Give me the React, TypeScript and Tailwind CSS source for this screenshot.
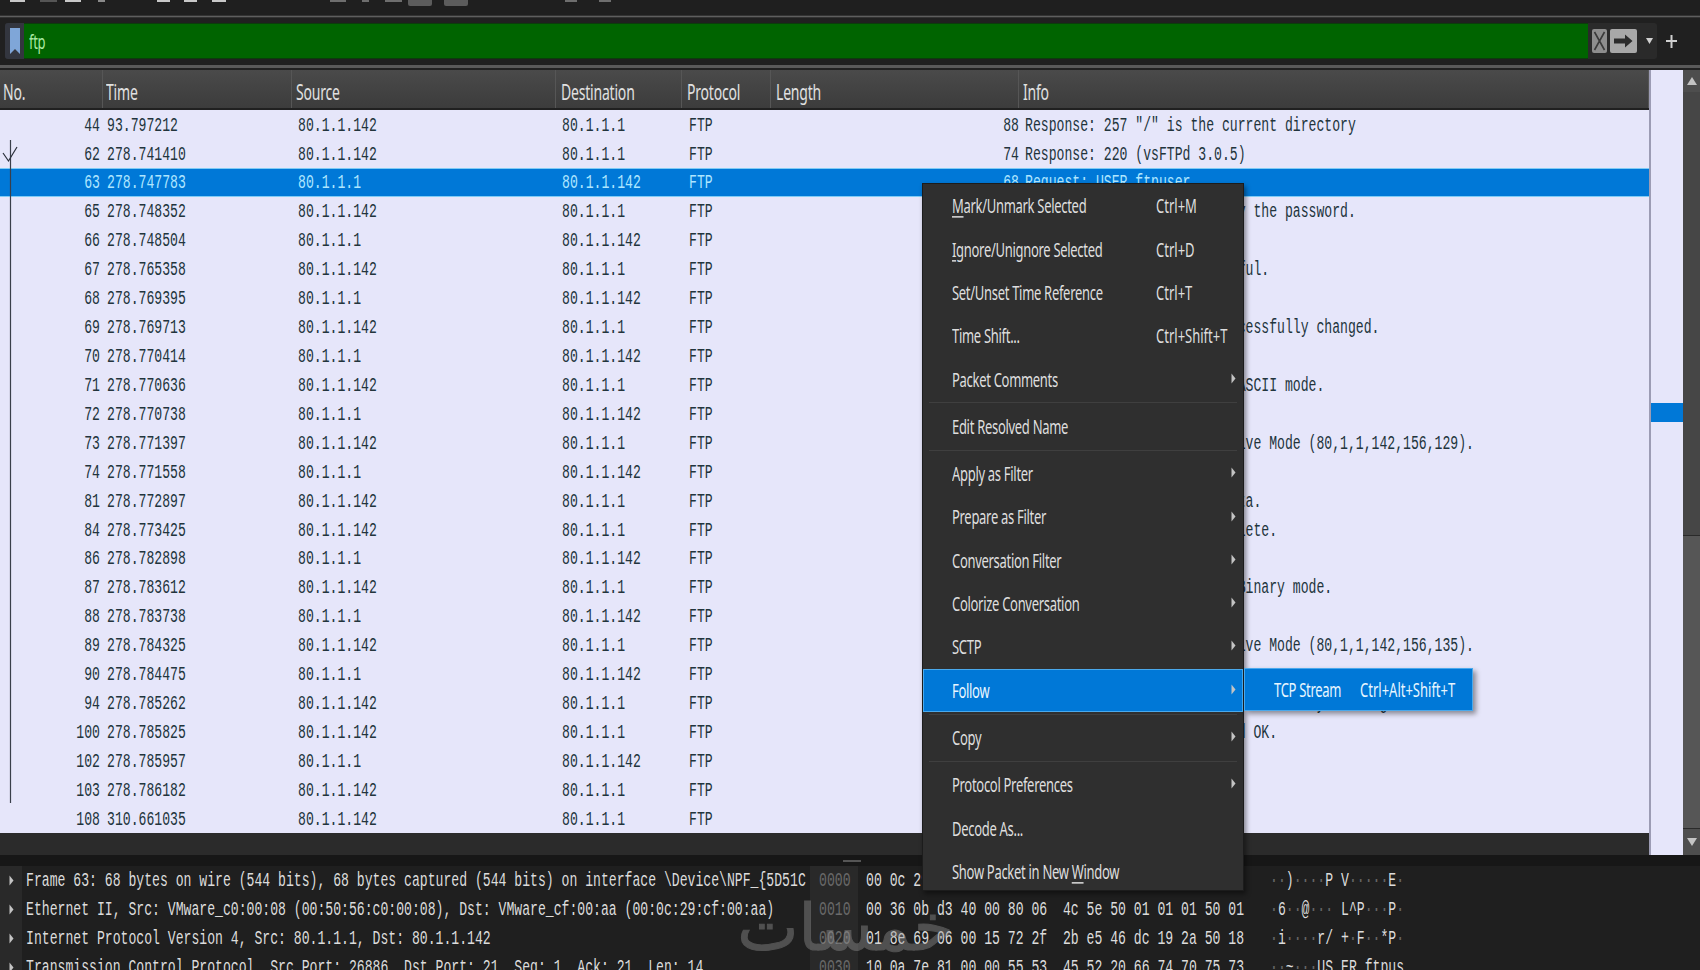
import React from "react";

const rows: [string, string, string, string, string, string][] = [
  ["44", "93.797212", "80.1.1.142", "80.1.1.1", "88", 'Response: 257 "/" is the current directory'],
  ["62", "278.741410", "80.1.1.142", "80.1.1.1", "74", "Response: 220 (vsFTPd 3.0.5)"],
  ["63", "278.747783", "80.1.1.1", "80.1.1.142", "68", "Request: USER ftpuser"],
  ["65", "278.748352", "80.1.1.142", "80.1.1.1", "88", "Response: 331 Please specify the password."],
  ["66", "278.748504", "80.1.1.1", "80.1.1.142", "68", "Request: PASS ftpuser"],
  ["67", "278.765358", "80.1.1.142", "80.1.1.1", "77", "Response: 230 Login successful."],
  ["68", "278.769395", "80.1.1.1", "80.1.1.142", "62", "Request: CWD /"],
  ["69", "278.769713", "80.1.1.142", "80.1.1.1", "91", "Response: 250 Directory successfully changed."],
  ["70", "278.770414", "80.1.1.1", "80.1.1.142", "62", "Request: TYPE A"],
  ["71", "278.770636", "80.1.1.142", "80.1.1.1", "84", "Response: 200 Switching to ASCII mode."],
  ["72", "278.770738", "80.1.1.1", "80.1.1.142", "60", "Request: PASV"],
  ["73", "278.771397", "80.1.1.142", "80.1.1.1", "105", "Response: 227 Entering Passive Mode (80,1,1,142,156,129)."],
  ["74", "278.771558", "80.1.1.1", "80.1.1.142", "60", "Request: LIST"],
  ["81", "278.772897", "80.1.1.142", "80.1.1.1", "93", "Response: 150 Ok to send data."],
  ["84", "278.773425", "80.1.1.142", "80.1.1.1", "78", "Response: 226 Transfer complete."],
  ["86", "278.782898", "80.1.1.1", "80.1.1.142", "62", "Request: TYPE I"],
  ["87", "278.783612", "80.1.1.142", "80.1.1.1", "85", "Response: 200 Switching to Binary mode."],
  ["88", "278.783738", "80.1.1.1", "80.1.1.142", "60", "Request: PASV"],
  ["89", "278.784325", "80.1.1.142", "80.1.1.1", "105", "Response: 227 Entering Passive Mode (80,1,1,142,156,135)."],
  ["90", "278.784475", "80.1.1.1", "80.1.1.142", "60", "Request: LIST"],
  ["94", "278.785262", "80.1.1.142", "80.1.1.1", "93", "Response: 150 Here comes the directory listing."],
  ["100", "278.785825", "80.1.1.142", "80.1.1.1", "78", "Response: 226 Directory send OK."],
  ["102", "278.785957", "80.1.1.1", "80.1.1.142", "60", "Request: QUIT"],
  ["103", "278.786182", "80.1.1.142", "80.1.1.1", "68", "Response: 221 Goodbye."],
  ["108", "310.661035", "80.1.1.142", "80.1.1.1", "68", "Response: 221 Goodbye."],
];

const headers = [
  { label: "No.", w: "w-[103px]", pl: "pl-[3px]" },
  { label: "Time", w: "w-[189px]", pl: "pl-[3px]" },
  { label: "Source", w: "w-[264px]", pl: "pl-[4px]" },
  { label: "Destination", w: "w-[126px]", pl: "pl-[5px]" },
  { label: "Protocol", w: "w-[89px]", pl: "pl-[5px]" },
  { label: "Length", w: "w-[248px]", pl: "pl-[5px]" },
  { label: "Info", w: "flex-1", pl: "pl-[4px]" },
];

const tall = "block origin-center scale-y-[1.5] whitespace-pre";
const mono = "font-['Liberation_Mono',monospace] text-[13.13px]";
const ui = "font-['Noto_Sans',sans-serif] text-[13px] tracking-[-0.3px]";

function PacketRow({ r, selected }: { r: (typeof rows)[number]; selected: boolean }) {
  return (
    <div
      className={`flex h-[28.93px] items-center pt-[2px] ${mono} ${
        selected ? "bg-[#0078d7] text-[#aee6ff] shadow-[inset_0_1px_0_#80ccf5,inset_0_-1px_0_#80ccf5]" : "text-[#22343c]"
      }`}
    >
      <span className={`${tall} w-[100px] text-right`}>{r[0]}</span>
      <span className={`${tall} w-[198px] pl-[7px]`}>{r[1]}</span>
      <span className={`${tall} w-[264px]`}>{r[2]}</span>
      <span className={`${tall} w-[127px]`}>{r[3]}</span>
      <span className={`${tall} w-[50px]`}>FTP</span>
      <span className={`${tall} w-[280px] text-right`}>{r[4]}</span>
      <span className={`${tall} pl-[6px]`}>{r[5]}</span>
    </div>
  );
}

function Caret({ className = "" }: { className?: string }) {
  return (
    <svg width="5" height="11" viewBox="0 0 5 11" className={className}>
      <path d="M0.5 0.5 L4.5 5.5 L0.5 10.5 Z" fill="#c4c4c4" />
    </svg>
  );
}

function MenuItem({ label, shortcut, sub, active }: { label: React.ReactNode; shortcut?: string; sub?: boolean; active?: boolean }) {
  return (
    <div
      className={`relative flex h-[43.3px] items-center pl-[29px] pt-[2px] ${ui} ${
        active ? "bg-[#0078d7] text-[#e8f6ff] shadow-[inset_0_0_0_1px_#4aa9ec]" : "text-[#dedede]"
      }`}
    >
      <span className={`${tall} w-[204px]`}>{label}</span>
      {shortcut && <span className={`${tall} tracking-normal`}>{shortcut}</span>}
      {sub && <Caret className="absolute right-[7px] top-[15px]" />}
    </div>
  );
}

function MenuSep() {
  return (
    <div className="flex h-[4px] items-center px-[6px]">
      <div className="h-px w-full bg-[#3f3f3f]" />
    </div>
  );
}

const hexRows = [
  ["0000", "00 0c 29 cf 00 aa 00 50  56 c0 00 08 08 00 45 00", "··)····P V·····E·"],
  ["0010", "00 36 0b d3 40 00 80 06  4c 5e 50 01 01 01 50 01", "·6··@··· L^P···P·"],
  ["0020", "01 8e 69 06 00 15 72 2f  2b e5 46 dc 19 2a 50 18", "·i····r/ +·F··*P·"],
  ["0030", "10 0a 7e 81 00 00 55 53  45 52 20 66 74 70 75 73", "··~···US ER ftpus"],
];

const details = [
  "Frame 63: 68 bytes on wire (544 bits), 68 bytes captured (544 bits) on interface \\Device\\NPF_{5D51C9A2-77B4-4E21-A1B3-6F0C2D8E1A90}, id 0",
  "Ethernet II, Src: VMware_c0:00:08 (00:50:56:c0:00:08), Dst: VMware_cf:00:aa (00:0c:29:cf:00:aa)",
  "Internet Protocol Version 4, Src: 80.1.1.1, Dst: 80.1.1.142",
  "Transmission Control Protocol, Src Port: 26886, Dst Port: 21, Seq: 1, Ack: 21, Len: 14",
];

const toolbarBits = [
  "ml-[10px] w-[15px] bg-[#c8c8c8]",
  "ml-[15px] w-[17px] bg-[#555555]",
  "ml-[8px] w-[16px] bg-[#c8c8c8]",
  "ml-[17px] w-[7px] bg-[#8a8a8a]",
  "ml-[52px] w-[13px] bg-[#c8c8c8]",
  "ml-[14px] w-[13px] bg-[#c8c8c8]",
  "ml-[15px] w-[14px] bg-[#c8c8c8]",
  "ml-[104px] w-[16px] bg-[#6e6e6e]",
  "ml-[16px] w-[7px] bg-[#6e6e6e]",
  "ml-[16px] w-[17px] bg-[#6e6e6e]",
];

export default function App() {
  return (
    <div className="relative flex h-[970px] w-[1700px] flex-col overflow-hidden bg-[#1e1e1e]">
      {/* toolbar */}
      <div className="flex h-[15px] shrink-0 items-start bg-[#1f1f1f]">
        {toolbarBits.map((c, i) => (
          <div key={i} className={`h-[2px] ${c}`} />
        ))}
        <div className="ml-[6px] h-[6px] w-[24px] rounded-b-[2px] bg-[#5c5c5c]" />
        <div className="ml-[12px] h-[6px] w-[24px] rounded-b-[2px] bg-[#5c5c5c]" />
        <div className="ml-[97px] h-[2px] w-[12px] bg-[#6e6e6e]" />
        <div className="ml-[22px] h-[2px] w-[12px] bg-[#6e6e6e]" />
      </div>
      <div className="h-[3px] shrink-0 border-y border-[#333333] bg-[#5e5e5e]" />

      {/* filter bar */}
      <div className="flex h-[47px] shrink-0 items-center bg-[#202020] pb-[1px] pl-[5px]">
        <div className="flex h-[36px] w-[1652px] items-center rounded-[3px] bg-[#2a2a2a]">
          <div className="flex h-full w-[19px] shrink-0 items-center justify-center rounded-l-[3px] bg-[#33363f]">
            <svg width="10" height="26" viewBox="0 0 10 26">
              <path d="M0 0 H10 V26 L5 21 L0 26 Z" fill="#7fa6d8" />
            </svg>
          </div>
          <div className="flex h-full w-[1564px] shrink-0 items-center border-y border-[#0b3d0b] bg-[#006400] pl-[5px] pt-[3px]">
            <span className={`${tall} ${ui} text-[#a9e9a2]`}>ftp</span>
          </div>
          <div className="ml-[4px] flex h-[24px] w-[15px] items-center justify-center rounded-[2px] bg-[#8e8e8e]">
            <svg width="13" height="20" viewBox="0 0 13 20">
              <path d="M1.5 1 L11.5 19 M11.5 1 L1.5 19" stroke="#3a3a3a" strokeWidth="1.6" />
            </svg>
          </div>
          <div className="ml-[3px] flex h-[24px] w-[27px] items-center justify-center rounded-[2px] bg-[#a8a8a8]">
            <svg width="19" height="14" viewBox="0 0 19 14">
              <path d="M0 4.5 H11 V0.5 L18.5 7 L11 13.5 V9.5 H0 Z" fill="#2c2c2c" />
            </svg>
          </div>
          <svg width="7" height="6" viewBox="0 0 7 6" className="ml-[9px]">
            <path d="M0 0 H7 L3.5 6 Z" fill="#d0d0d0" />
          </svg>
        </div>
        <svg width="11" height="13" viewBox="0 0 11 13" className="ml-[9px]">
          <path d="M5.5 0 V13 M0 6 H11" stroke="#d0d0d0" strokeWidth="2" />
        </svg>
      </div>
      <div className="h-[5px] shrink-0 border-b-2 border-[#222222] bg-[#5a5a5a]" />

      {/* packet list */}
      <div className="flex h-[785px] shrink-0">
        <div className="flex w-[1651px] shrink-0 flex-col border-r-2 border-[#9c9cb4]">
          <div className="flex h-[40px] shrink-0 border-b-2 border-[#202020] bg-gradient-to-b from-[#4a4a4a] to-[#3c3c3c]">
            {headers.map((h) => (
              <div key={h.label} className={`flex h-full items-center border-r border-[#565656] pt-[4px] ${h.w} ${h.pl}`}>
                <span className={`${tall} font-['Noto_Sans',sans-serif] text-[14px] tracking-[-0.2px] text-[#e0e0e0]`}>{h.label}</span>
              </div>
            ))}
          </div>
          <div className="h-[722.5px] shrink-0 overflow-hidden bg-[#e6e6fa]">
            {rows.map((r, i) => (
              <PacketRow key={r[0]} r={r} selected={i === 2} />
            ))}
          </div>
          <div className="flex-1 bg-[#2b2b2b]" />
        </div>
        <div className="flex w-[32px] shrink-0 flex-col bg-[#e6e6fa]">
          <div className="mt-[333px] h-[19px] bg-[#0078d7]" />
        </div>
        <div className="flex w-[17px] shrink-0 flex-col bg-[#464646]">
          <div className="flex h-[22px] items-center justify-center bg-[#4e4e4e]">
            <svg width="10" height="8" viewBox="0 0 10 8">
              <path d="M5 0 L10 8 H0 Z" fill="#c4c4c4" />
            </svg>
          </div>
          <div className="h-[443px] shrink-0" />
          <div className="h-[293px] shrink-0 border-t border-[#2a2a2a] bg-[#565656]" />
          <div className="flex flex-1 items-center justify-center border-t border-[#2a2a2a] bg-[#4e4e4e]">
            <svg width="10" height="8" viewBox="0 0 10 8">
              <path d="M0 0 H10 L5 8 Z" fill="#c4c4c4" />
            </svg>
          </div>
        </div>
      </div>

      {/* splitter */}
      <div className="flex h-[11px] shrink-0 items-center bg-[#171717] pl-[843px]">
        <div className="h-[2px] w-[18px] bg-[#555555]" />
      </div>

      {/* bottom panes */}
      <div className="flex min-h-0 flex-1 overflow-hidden bg-[#1f1f1f] text-[#dcdcdc]">
        <div className="flex w-[806px] shrink-0 overflow-hidden">
          <div className="flex w-[22px] shrink-0 flex-col bg-[#292929] pl-[9px]">
            {details.map((d) => (
              <div key={d} className="flex h-[29px] shrink-0 items-center">
                <Caret />
              </div>
            ))}
          </div>
          <div className="min-w-0 flex-1 overflow-hidden pl-[4px]">
            {details.map((d) => (
              <div key={d} className={`flex h-[29px] items-center ${mono}`}>
                <span className={tall}>{d}</span>
              </div>
            ))}
          </div>
        </div>
        <div className="w-[4px] shrink-0" />
        <div className="flex w-[48px] shrink-0 flex-col bg-[#292929] pl-[9px] text-[#6a6a6a]">
          {hexRows.map((h) => (
            <div key={h[0]} className={`flex h-[29px] shrink-0 items-center ${mono}`}>
              <span className={tall}>{h[0]}</span>
            </div>
          ))}
        </div>
        <div className="pl-[8px]">
          {hexRows.map((h) => (
            <div key={h[0]} className={`flex h-[29px] items-center ${mono}`}>
              <span className={`${tall} w-[404px]`}>{h[1]}</span>
              <span className={tall}>
                {h[2].split("").map((ch, i) => (
                  <span key={i} className={ch === "·" ? "text-[#666666]" : ""}>
                    {ch}
                  </span>
                ))}
              </span>
            </div>
          ))}
        </div>
      </div>

      {/* related packet line */}
      <svg width="20" height="670" viewBox="0 0 20 670" className="pointer-events-none absolute left-0 top-[138px]">
        <path d="M10.5 2 V665" stroke="#3a3f4a" strokeWidth="1.2" fill="none" />
        <path d="M3 15 L8.5 23 L17 9" stroke="#2a2f3a" strokeWidth="1.2" fill="none" />
      </svg>

      {/* watermark */}
      <div
        dir="rtl"
        className="pointer-events-none absolute left-[748px] top-[888px] w-[206px] text-center font-['DejaVu_Sans',sans-serif] text-[65px] leading-[80px] text-[#9a9a9a] opacity-40 [-webkit-text-stroke:1px_#9a9a9a]"
      >
        خمسات
      </div>

      {/* context menu */}
      <div className="absolute left-[922px] top-[183px] h-[708px] w-[322px] overflow-hidden border border-[#1c1c1c] bg-[#2f2f2f] pt-[0.5px] shadow-[2px_3px_5px_rgba(0,0,0,0.45)]">
        <MenuItem label={<><span className="underline underline-offset-2">M</span>ark/Unmark Selected</>} shortcut="Ctrl+M" />
        <MenuItem label={<><span className="underline underline-offset-2">I</span>gnore/Unignore Selected</>} shortcut="Ctrl+D" />
        <MenuItem label="Set/Unset Time Reference" shortcut="Ctrl+T" />
        <MenuItem label="Time Shift..." shortcut="Ctrl+Shift+T" />
        <MenuItem label="Packet Comments" sub />
        <MenuSep />
        <MenuItem label="Edit Resolved Name" />
        <MenuSep />
        <MenuItem label="Apply as Filter" sub />
        <MenuItem label="Prepare as Filter" sub />
        <MenuItem label="Conversation Filter" sub />
        <MenuItem label="Colorize Conversation" sub />
        <MenuItem label="SCTP" sub />
        <MenuItem label="Follow" sub active />
        <MenuSep />
        <MenuItem label="Copy" sub />
        <MenuSep />
        <MenuItem label="Protocol Preferences" sub />
        <MenuItem label="Decode As..." />
        <MenuItem label={<>Show Packet in New <span className="underline underline-offset-2">W</span>indow</>} />
      </div>

      {/* submenu */}
      <div className={`absolute left-[1244px] top-[668px] flex h-[43px] w-[229px] items-center bg-[#0078d7] pl-[30px] pt-[2px] text-[#e8f6ff] shadow-[inset_0_0_0_1px_#4aa9ec,3px_3px_5px_rgba(0,0,0,0.4)] ${ui}`}>
        <span className={`${tall} w-[86px]`}>TCP Stream</span>
        <span className={`${tall} tracking-normal`}>Ctrl+Alt+Shift+T</span>
      </div>
    </div>
  );
}
